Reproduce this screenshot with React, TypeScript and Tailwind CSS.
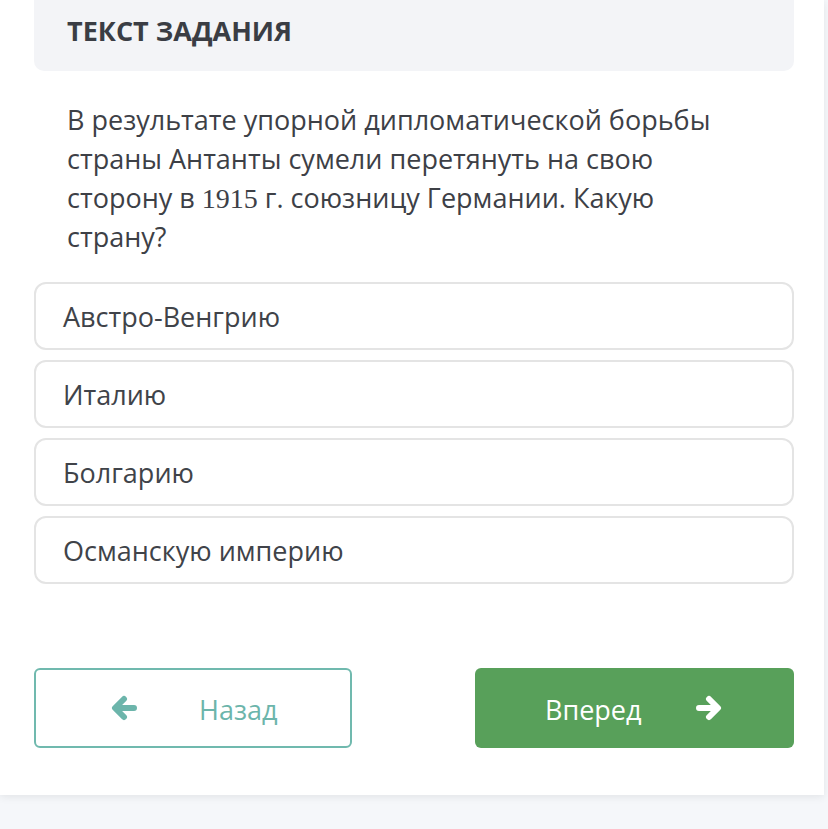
import React from "react";

const options = ["Австро-Венгрию", "Италию", "Болгарию", "Османскую империю"];

function Arrow({ dir, color }: { dir: "left" | "right"; color: string }) {
  const d = dir === "left" ? "M24 13 H6 M14 4 L5 13 L14 22" : "M4 13 H22 M14 4 L23 13 L14 22";
  return (
    <svg width="28" height="26" viewBox="0 0 28 26" fill="none">
      <path d={d} stroke={color} strokeWidth="6" strokeLinecap="round" strokeLinejoin="round" />
    </svg>
  );
}

export default function App() {
  return (
    <div className="min-h-[829px] w-[828px] bg-[#f5f7fa]" style={{ fontFamily: '"Open Sans", "Noto Sans", sans-serif' }}>
      <div className="w-[824px] bg-white pb-[47px] shadow-[0_2px_8px_rgba(0,0,0,0.08)]">
        <div className="ml-[34px] flex h-[71px] w-[760px] items-center rounded-b-[10px] bg-[#f3f4f7] px-[33px] pb-[8px]">
          <h2 className="text-[27px] font-bold text-[#3a3d44]">ТЕКСТ ЗАДАНИЯ</h2>
        </div>
        <p className="ml-[67px] mt-[29px] w-[680px] text-[27px] leading-[39px] text-[#3d4046]">
          В результате упорной дипломатической борьбы страны Антанты сумели перетянуть на свою сторону в{" "}
          <span className="text-[28px] leading-none" style={{ fontFamily: '"Liberation Serif", serif' }}>1915</span> г. союзницу Германии. Какую страну?
        </p>
        <div className="ml-[34px] mt-[26px] flex w-[760px] flex-col gap-[10px]">
          {options.map((o) => (
            <div key={o} className="flex h-[68px] items-center rounded-[12px] border-2 border-[#e4e4e4] px-[27px] pt-[3px] text-[27px] text-[#404349]">
              {o}
            </div>
          ))}
        </div>
        <div className="ml-[34px] mt-[84px] flex w-[760px] justify-between">
          <button className="flex h-[80px] w-[318px] items-center rounded-[6px] border-2 border-[#70b9ae] pl-[74px] text-[27px] text-[#6cb5ab]">
            <Arrow dir="left" color="#6cb5ab" />
            <span className="ml-[61px] pt-[4px]">Назад</span>
          </button>
          <button className="flex h-[80px] w-[319px] items-center rounded-[6px] bg-[#58a05a] pl-[70px] text-[27px] text-white">
            <span className="pt-[4px]">Вперед</span>
            <span className="ml-[53px]">
              <Arrow dir="right" color="#ffffff" />
            </span>
          </button>
        </div>
      </div>
    </div>
  );
}
